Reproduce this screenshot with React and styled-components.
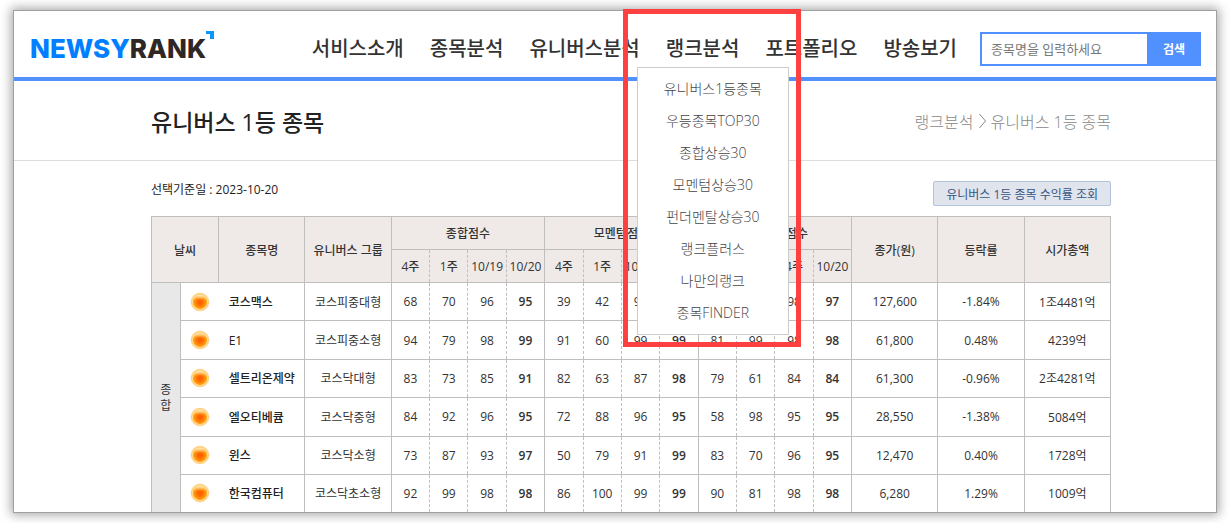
import React from 'react';
import styled, { createGlobalStyle } from 'styled-components';

const GlobalStyle = createGlobalStyle`
  * {
    box-sizing: border-box;
  }

  body {
    margin: 0;
    background: #fff;
    color: #222;
    font-family: 'Open Sans', 'Noto Sans CJK KR', sans-serif;
    font-size: 12px;
  }
`;

const Page = styled.div`
  margin: 10px 13px;
  border: 1px solid #a0a0a0;
  background: #fff;
  box-shadow: 0 0 10px 2px rgba(0, 0, 0, .35);
`;

const Header = styled.header`
  display: flex;
  align-items: center;
  height: 70px;
  padding: 10px 15px 0 16px;
  border-bottom: 4px solid #5191ff;
`;

const Logo = styled.a`
  display: flex;
  align-items: flex-start;
  flex: 1;
  color: #2f2725;
  font-family: Inter, sans-serif;
  font-size: 26px;
  font-weight: 800;
  line-height: 36px;
  text-decoration: none;

  span {
    color: #0080ff;
  }
`;

const Menu = styled.nav`
  display: flex;
  gap: 26px;
  margin-right: 23px;
`;

const MenuItem = styled.div`
  position: relative;
`;

const MenuLink = styled.a`
  color: #333;
  font-size: 20px;
  font-weight: 500;
  line-height: 30px;
  text-decoration: none;
  white-space: nowrap;
`;

const SubMenu = styled.ul`
  position: absolute;
  z-index: 10;
  top: 33px;
  left: -29px;
  width: 152px;
  margin: 0;
  padding: 5px 0;
  border: 1px solid #ccc;
  background: #fff;
  list-style: none;
  text-align: center;
`;

const SubLink = styled.a`
  display: block;
  color: #444;
  font-size: 14px;
  font-weight: 300;
  line-height: 32px;
  text-decoration: none;
`;

const Highlight = styled.div`
  position: absolute;
  z-index: 20;
  top: -25px;
  left: -43px;
  width: 178px;
  height: 338px;
  border: 5px solid #ff4040;
  pointer-events: none;
`;

const Search = styled.form`
  display: flex;
  height: 34px;
`;

const SearchInput = styled.input`
  width: 167px;
  padding: 0 9px;
  border: 2px solid #5191ff;
  border-right: 0;
  border-radius: 0;
  font-family: inherit;
  font-size: 13px;

  &::placeholder {
    color: #777;
    opacity: 1;
  }
`;

const SearchButton = styled.button`
  width: 54px;
  padding: 0;
  border: 0;
  background: #5191ff;
  color: #fff;
  font-family: inherit;
  font-size: 12px;
  font-weight: 700;
`;

const TitleBar = styled.div`
  display: flex;
  align-items: center;
  justify-content: space-between;
  height: 80px;
  padding: 0 105px 0 137px;
  border-bottom: 1px solid #ddd;
`;

const Title = styled.h1`
  margin: 0;
  color: #222;
  font-size: 23px;
  font-weight: 500;
`;

const Breadcrumb = styled.div`
  display: flex;
  align-items: center;
  gap: 4px;
  color: #888;
  font-size: 16px;
  font-weight: 300;
`;

const Content = styled.main`
  padding: 20px 105px 0 137px;
`;

const Toolbar = styled.div`
  display: flex;
  align-items: flex-start;
  justify-content: space-between;
  height: 25px;
  margin-bottom: 10px;
  line-height: 18px;
`;

const ReturnButton = styled.button`
  height: 25px;
  padding: 0 12px;
  border: 1px solid #b4c3dc;
  border-radius: 2px;
  background: #e0e4ed;
  color: #375682;
  font-family: inherit;
  font-size: 12px;
`;

const Table = styled.table`
  width: 100%;
  height: 296px;
  border-collapse: collapse;
  table-layout: fixed;
  text-align: center;
`;

const Col = styled.col`
  width: ${(props) => props.$width}%;
`;

const HeadRow = styled.tr`
  height: 33px;
`;

const Th = styled.th`
  padding: 0;
  border: 1px solid #bfbfbf;
  border-left-style: ${(props) => (props.$dashed ? 'dashed' : 'solid')};
  border-right-style: ${(props) => (props.$dashedRight ? 'dashed' : 'solid')};
  background: #efeae8;
  color: #333;
  font-weight: 500;
  white-space: nowrap;
`;

const Td = styled.td`
  padding: 0;
  border: 1px solid #bfbfbf;
  border-bottom: 0;
  border-left-style: ${(props) => (props.$dashed ? 'dashed' : 'solid')};
  border-right-style: ${(props) => (props.$dashedRight ? 'dashed' : 'solid')};
  color: #333;
  font-weight: ${(props) => (props.$strong ? 600 : 400)};
  white-space: nowrap;
`;

const GroupTd = styled(Td)`
  background: #e8e8e8;
  line-height: 16px;
`;

const IconTd = styled(Td)`
  border-right: 0;

  svg {
    display: block;
    margin: 0 auto;
  }
`;

const NameTd = styled(Td)`
  padding-left: 10px;
  border-left: 0;
  color: #222;
  font-weight: 500;
  text-align: left;
`;

const columns = [3, 4, 9, 9, 4, 4, 4, 4, 4, 4, 4, 4, 4, 4, 4, 4, 9, 9, 9];

const menu = ['서비스소개', '종목분석', '유니버스분석', '랭크분석', '포트폴리오', '방송보기'];

const subMenu = [
  '유니버스1등종목',
  '우등종목TOP30',
  '종합상승30',
  '모멘텀상승30',
  '펀더멘탈상승30',
  '랭크플러스',
  '나만의랭크',
  '종목FINDER',
];

const periods = ['4주', '1주', '10/19', '10/20', '4주', '1주', '10/19', '10/20', '4주', '1주', '4주', '10/20'];

const stocks = [
  { name: '코스맥스', group: '코스피중대형', scores: [68, 70, 96, 95, 39, 42, 95, 96, 88, 97, 98, 97], price: '127,600', rate: '-1.84%', cap: '1조4481억' },
  { name: 'E1', group: '코스피중소형', scores: [94, 79, 98, 99, 91, 60, 99, 99, 81, 99, 98, 98], price: '61,800', rate: '0.48%', cap: '4239억' },
  { name: '셀트리온제약', group: '코스닥대형', scores: [83, 73, 85, 91, 82, 63, 87, 98, 79, 61, 84, 84], price: '61,300', rate: '-0.96%', cap: '2조4281억' },
  { name: '엘오티베큠', group: '코스닥중형', scores: [84, 92, 96, 95, 72, 88, 96, 95, 58, 98, 95, 95], price: '28,550', rate: '-1.38%', cap: '5084억' },
  { name: '윈스', group: '코스닥소형', scores: [73, 87, 93, 97, 50, 79, 91, 99, 83, 70, 96, 95], price: '12,470', rate: '0.40%', cap: '1728억' },
  { name: '한국컴퓨터', group: '코스닥초소형', scores: [92, 99, 98, 98, 86, 100, 99, 99, 90, 81, 98, 98], price: '6,280', rate: '1.29%', cap: '1009억' },
];

const LogoMark = () => (
  <svg width="8" height="8" viewBox="0 0 8 8" aria-hidden="true">
    <path d="M0 0H8V8H4V3H0Z" fill="#0a96ff" />
  </svg>
);

const Separator = () => (
  <svg width="9" height="16" viewBox="0 0 9 16" fill="none" stroke="currentColor" aria-hidden="true">
    <path d="M1.5 1L7.5 8L1.5 15" />
  </svg>
);

const SunIcon = () => (
  <svg width="20" height="20" viewBox="0 0 20 20" role="img" aria-label="맑음">
    <defs>
      <radialGradient id="sun" cx="50%" cy="52%" r="50%">
        <stop offset="0" stopColor="#ff5500" />
        <stop offset=".45" stopColor="#ff7300" />
        <stop offset="1" stopColor="#ffb01e" />
      </radialGradient>
      <linearGradient id="shine" x1="0" y1="0" x2="0" y2="1">
        <stop offset="0" stopColor="#fff3d0" stopOpacity=".9" />
        <stop offset=".35" stopColor="#fff3d0" stopOpacity="0" />
      </linearGradient>
    </defs>
    <circle cx="10" cy="10" r="9.6" fill="#ffedd0" />
    <circle cx="10" cy="10" r="8.4" fill="#ffe6a8" stroke="#fdc468" />
    <circle cx="10" cy="10" r="7.2" fill="url(#sun)" />
    <circle cx="10" cy="10" r="7.2" fill="url(#shine)" />
  </svg>
);

const StockTable = () => (
  <Table>
    <colgroup>
      {columns.map((width, i) => <Col key={i} $width={width} />)}
    </colgroup>
    <thead>
      <HeadRow>
        <Th colSpan={2} rowSpan={2}>날씨</Th>
        <Th rowSpan={2}>종목명</Th>
        <Th rowSpan={2}>유니버스 그룹</Th>
        <Th colSpan={4}>종합점수</Th>
        <Th colSpan={4}>모멘텀점수</Th>
        <Th colSpan={4}>펀더멘탈점수</Th>
        <Th rowSpan={2}>종가(원)</Th>
        <Th rowSpan={2}>등락률</Th>
        <Th rowSpan={2}>시가총액</Th>
      </HeadRow>
      <HeadRow>
        {periods.map((period, i) => (
          <Th key={i} $dashed={i % 4 !== 0} $dashedRight={i % 4 !== 3}>{period}</Th>
        ))}
      </HeadRow>
    </thead>
    <tbody>
      {stocks.map((stock, row) => (
        <tr key={stock.name}>
          {row === 0 && <GroupTd rowSpan={stocks.length}>종<br />합</GroupTd>}
          <IconTd><SunIcon /></IconTd>
          <NameTd>{stock.name}</NameTd>
          <Td>{stock.group}</Td>
          {stock.scores.map((score, i) => (
            <Td key={i} $dashed={i % 4 !== 0} $dashedRight={i % 4 !== 3} $strong={i % 4 === 3}>{score}</Td>
          ))}
          <Td>{stock.price}</Td>
          <Td>{stock.rate}</Td>
          <Td>{stock.cap}</Td>
        </tr>
      ))}
    </tbody>
  </Table>
);

const App = () => (
  <>
    <GlobalStyle />
    <Page>
      <Header>
        <Logo href="#" aria-label="NEWSYRANK"><span>NEWSY</span>RANK<LogoMark /></Logo>
        <Menu>
          {menu.map((item) => (
            <MenuItem key={item}>
              <MenuLink href="#">{item}</MenuLink>
              {item === '랭크분석' && (
                <>
                  <SubMenu>
                    {subMenu.map((sub) => <li key={sub}><SubLink href="#">{sub}</SubLink></li>)}
                  </SubMenu>
                  <Highlight />
                </>
              )}
            </MenuItem>
          ))}
        </Menu>
        <Search onSubmit={(e) => e.preventDefault()}>
          <SearchInput type="text" placeholder="종목명을 입력하세요" aria-label="종목명" />
          <SearchButton type="submit">검색</SearchButton>
        </Search>
      </Header>
      <TitleBar>
        <Title>유니버스 1등 종목</Title>
        <Breadcrumb>
          <span>랭크분석</span>
          <Separator />
          <span>유니버스 1등 종목</span>
        </Breadcrumb>
      </TitleBar>
      <Content>
        <Toolbar>
          <span>선택기준일 : 2023-10-20</span>
          <ReturnButton type="button">유니버스 1등 종목 수익률 조회</ReturnButton>
        </Toolbar>
        <StockTable />
      </Content>
    </Page>
  </>
);

export default App;
